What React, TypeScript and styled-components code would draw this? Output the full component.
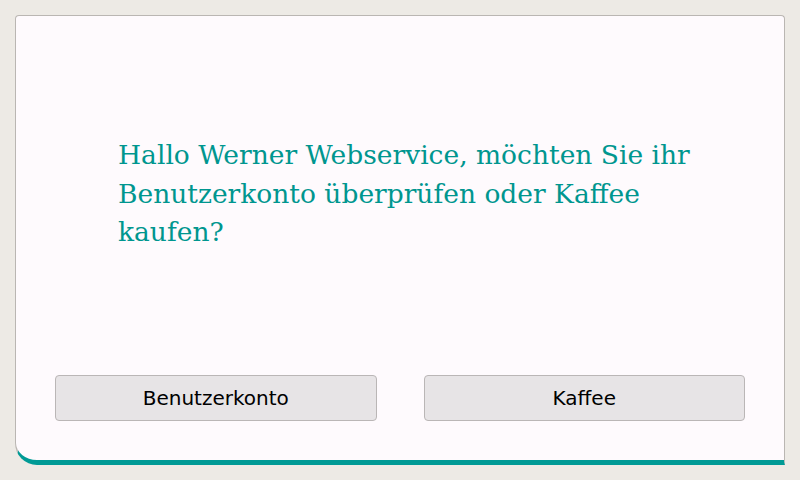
import React from 'react';
import styled, { createGlobalStyle } from 'styled-components';

const GlobalStyle = createGlobalStyle`
  html, body {
    margin: 0;
    padding: 0;
    background-color: #edeae5;
  }
  body {
    width: 800px;
    height: 480px;
    overflow: hidden;
  }
`;

const Screen = styled.div`
  width: 800px;
  height: 480px;
  padding: 15px;
  box-sizing: border-box;
`;

const Card = styled.div`
  width: 770px;
  height: 450px;
  box-sizing: border-box;
  display: flex;
  flex-direction: column;
  background-color: #fefafd;
  border: 1px solid #bab6b2;
  border-bottom: 5px solid #009a95;
  border-radius: 4px 4px 0 22px;
`;

const Question = styled.p`
  margin: 0;
  padding: 120px 0 0 102px;
  width: 590px;
  font-family: 'DejaVu Serif', 'Liberation Serif', serif;
  font-size: 26.5px;
  line-height: 38.5px;
  color: #00968f;
  flex: 1;
`;

const ButtonRow = styled.div`
  display: flex;
  gap: 47px;
  padding: 0 39px 39px;
`;

const ChoiceButton = styled.button`
  flex: 1;
  height: 46px;
  background-color: #e7e4e6;
  border: 1px solid #bab6b6;
  border-radius: 4px;
  font-family: 'DejaVu Sans', sans-serif;
  font-size: 20px;
  color: #000;
  cursor: pointer;
`;

const App: React.FC = () => {
  return (
    <>
      <GlobalStyle />
      <Screen>
        <Card>
          <Question>
            Hallo Werner Webservice, möchten Sie ihr Benutzerkonto überprüfen oder Kaffee kaufen?
          </Question>
          <ButtonRow>
            <ChoiceButton>Benutzerkonto</ChoiceButton>
            <ChoiceButton>Kaffee</ChoiceButton>
          </ButtonRow>
        </Card>
      </Screen>
    </>
  );
};

export default App;
